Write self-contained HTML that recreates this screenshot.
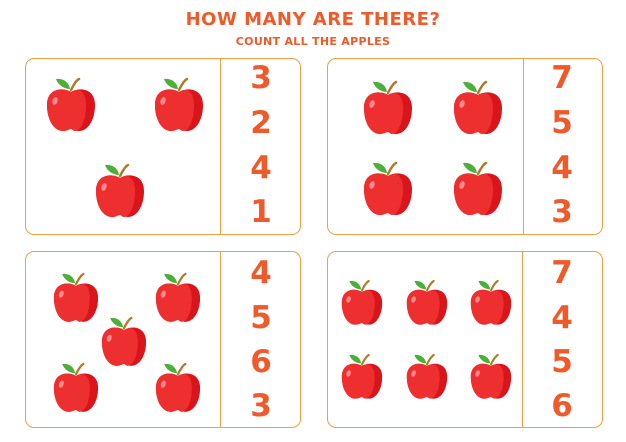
<!DOCTYPE html>
<html><head><style>
html,body{margin:0;padding:0;background:#fff;width:626px;height:442px;overflow:hidden;position:relative;font-family:"DejaVu Sans","Liberation Sans",sans-serif}
.t{position:absolute;left:0;width:626px;text-align:center;color:#ee5a2a;font-weight:bold}
.p{position:absolute;border:1.5px solid #f0a040;border-radius:9px;box-sizing:border-box;width:276px;height:177px}
.d{position:absolute;top:0;bottom:0;width:0;border-left:1.5px solid #f0a040}
.n{position:absolute;font-weight:bold;font-size:31px;color:#ee5a2a;width:40px;text-align:center;line-height:31px}
svg.a{position:absolute}
</style></head><body>
<svg width="0" height="0" style="position:absolute"><defs>
<symbol id="ap" viewBox="0 0 50 56">
<path d="M25 14 C29 6 31 4 33 3" stroke="#b07a2a" stroke-width="2.5" fill="none" stroke-linecap="round"/>
<path d="M24 13 C18 13 12 9 10 3 C17 2 23 6 24 13Z" fill="#4caf3a"/>
<path d="M25 16 C33 11 49 12 49 29 C49 44 42 55 33 55 C29 55 27 53 25 53 C23 53 21 55 17 55 C8 55 1 44 1 29 C1 12 17 11 25 16Z" fill="#d9141b"/>
<path d="M25 16 C31 12 40 13 40 29 C40 44 35 55 29 55 C27 55 26 53 25 53 C23 53 21 55 17 55 C8 55 1 44 1 29 C1 12 17 11 25 16Z" fill="#ee2f2f"/>
<ellipse cx="9" cy="25" rx="2.5" ry="4" fill="#ff8a8a" transform="rotate(20 9 25)"/>
</symbol></defs></svg>

<div class="t" style="top:9px;font-size:18px;letter-spacing:0.5px">HOW MANY ARE THERE?</div>
<div class="t" style="top:35px;font-size:11px;letter-spacing:0.3px">COUNT ALL THE APPLES</div>

<div class="p" style="left:25px;top:58px"><div class="d" style="left:194px"></div></div>
<div class="p" style="left:327px;top:58px"><div class="d" style="left:195px"></div></div>
<div class="p" style="left:25px;top:251px"><div class="d" style="left:194px"></div></div>
<div class="p" style="left:327px;top:251px"><div class="d" style="left:194px"></div></div>

<div class="n" style="left:241px;top:63px">3</div>
<div class="n" style="left:241px;top:108px">2</div>
<div class="n" style="left:241px;top:153px">4</div>
<div class="n" style="left:241px;top:197px">1</div>
<div class="n" style="left:542px;top:63px">7</div>
<div class="n" style="left:542px;top:108px">5</div>
<div class="n" style="left:542px;top:153px">4</div>
<div class="n" style="left:542px;top:197px">3</div>
<div class="n" style="left:241px;top:258px">4</div>
<div class="n" style="left:241px;top:303px">5</div>
<div class="n" style="left:241px;top:347px">6</div>
<div class="n" style="left:241px;top:391px">3</div>
<div class="n" style="left:542px;top:258px">7</div>
<div class="n" style="left:542px;top:303px">4</div>
<div class="n" style="left:542px;top:347px">5</div>
<div class="n" style="left:542px;top:391px">6</div>

<svg class="a" style="left:46px;top:76px" width="50" height="56"><use href="#ap"/></svg>
<svg class="a" style="left:154px;top:76px" width="50" height="56"><use href="#ap"/></svg>
<svg class="a" style="left:95px;top:162px" width="50" height="56"><use href="#ap"/></svg>

<svg class="a" style="left:363px;top:79px" width="50" height="56"><use href="#ap"/></svg>
<svg class="a" style="left:453px;top:79px" width="50" height="56"><use href="#ap"/></svg>
<svg class="a" style="left:363px;top:160px" width="50" height="56"><use href="#ap"/></svg>
<svg class="a" style="left:453px;top:160px" width="50" height="56"><use href="#ap"/></svg>

<svg class="a" style="left:53px;top:271px" width="46" height="52"><use href="#ap"/></svg>
<svg class="a" style="left:155px;top:271px" width="46" height="52"><use href="#ap"/></svg>
<svg class="a" style="left:101px;top:315px" width="46" height="52"><use href="#ap"/></svg>
<svg class="a" style="left:53px;top:361px" width="46" height="52"><use href="#ap"/></svg>
<svg class="a" style="left:155px;top:361px" width="46" height="52"><use href="#ap"/></svg>

<svg class="a" style="left:341px;top:278px" width="42" height="48"><use href="#ap"/></svg>
<svg class="a" style="left:406px;top:278px" width="42" height="48"><use href="#ap"/></svg>
<svg class="a" style="left:470px;top:278px" width="42" height="48"><use href="#ap"/></svg>
<svg class="a" style="left:341px;top:352px" width="42" height="48"><use href="#ap"/></svg>
<svg class="a" style="left:406px;top:352px" width="42" height="48"><use href="#ap"/></svg>
<svg class="a" style="left:470px;top:352px" width="42" height="48"><use href="#ap"/></svg>
</body></html>
